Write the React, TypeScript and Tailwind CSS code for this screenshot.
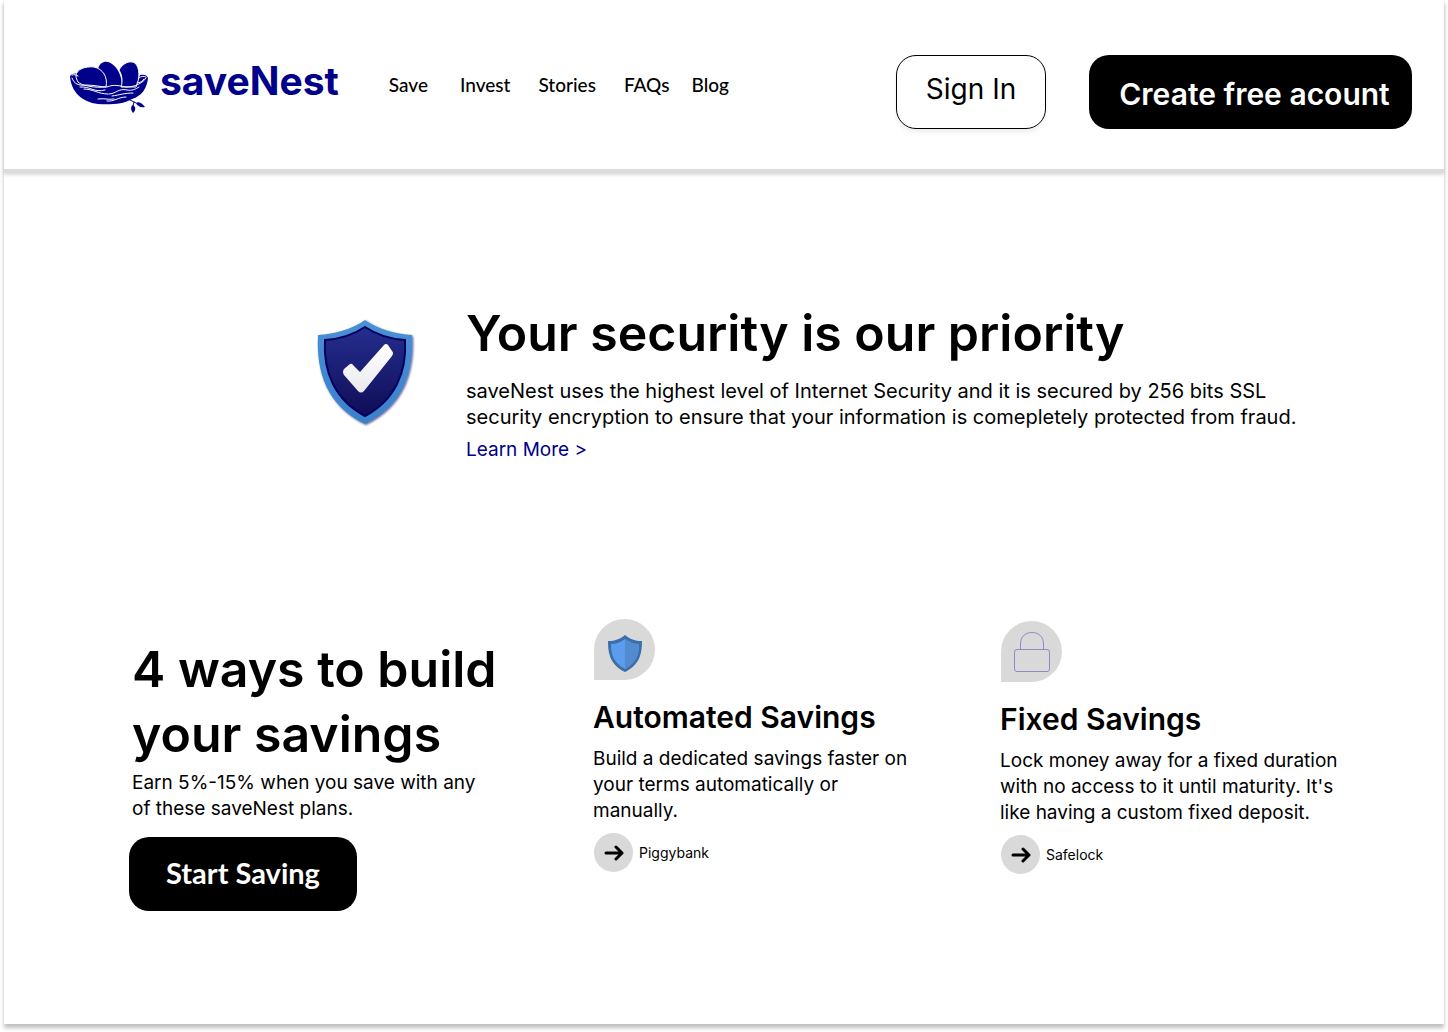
import React from "react";

function NestLogo() {
  return (
    <svg viewBox="0 0 100 70" className="h-[70px] w-[100px]" aria-hidden="true">
      <g fill="#00008b">
        <path d="M10 26C12 23 16 23 20 24L24 34C42 38 62 38 76 34L80 25C84 24 87 25 88 28C87 38 82 46 72 49C64 54 50 55 38 54C22 52 11 42 10 26Z" />
        <path d="M38 19C40 11 47 10 52 14C58 18 62 26 62 37H44Z" />
        <g stroke="#fff" strokeWidth="1">
          <path d="M59 20C63 13 70 10 75 13C80 18 80 28 76 37H61C63 31 62 25 59 20Z" />
          <path d="M16 26C16 19 26 16 34 17C43 19 48 27 46 37C36 38 22 36 18 32C17 30 16 28 16 26Z" />
        </g>
        <path d="M73 55C70 56 71 61 73 63C76 60 76 57 73 55Z" />
        <path d="M76 53C78 51 82 53 85 57C81 58 77 56 76 53Z" />
      </g>
      <path d="M66 48L76 53M74 52L73 56" fill="none" stroke="#00008b" strokeWidth="1" strokeLinecap="round" />
      <g fill="none" stroke="#fff" strokeWidth="1" strokeLinecap="round">
        <path d="M12 25C14 24 16 25 18 26M12 28C14 34 19 36 26 35C34 35 41 37 47 37C54 34 60 36 66 37C75 37 83 33 86 28" />
        <path d="M79 28C81 26 84 26 86 27M77 33C80 33 83 31 84 29" />
        <path d="M20 37C30 36 34 43 45 40" />
        <path d="M24 39C33 39 38 44 48 44" />
        <path d="M49 44C56 44 58 38 67 40C72 41 76 39 79 37" />
        <path d="M52 46C60 45 64 43 73 43" />
        <path d="M38 49C44 48 48 50 54 49" />
        <path d="M47 51C54 52 58 47 66 47" />
      </g>
    </svg>
  );
}

function CheckShield() {
  return (
    <svg viewBox="0 0 130 130" className="h-[130px] w-[130px]" aria-hidden="true">
      <defs>
        <linearGradient id="shieldRim" x1="0" y1="0" x2="0" y2="1">
          <stop offset="0" stopColor="#4a90d5" />
          <stop offset="1" stopColor="#3a80cb" />
        </linearGradient>
        <linearGradient id="shieldBody" x1="0" y1="0" x2="0" y2="1">
          <stop offset="0" stopColor="#242e8e" />
          <stop offset="1" stopColor="#100d58" />
        </linearGradient>
        <linearGradient id="checkFill" x1="0" y1="0" x2="0" y2="1">
          <stop offset="0" stopColor="#ffffff" />
          <stop offset="1" stopColor="#e9e9ee" />
        </linearGradient>
        <filter id="shieldShadow" x="-20%" y="-20%" width="140%" height="140%">
          <feDropShadow dx="1" dy="1" stdDeviation="0.8" floodColor="#1c1560" floodOpacity="0.7" />
        </filter>
      </defs>
      <path
        d="M65 15C78 24 95 29 112 30C114 67 103 101 65 119C27 101 16 67 18 30C35 29 52 24 65 15Z"
        fill="url(#shieldRim)"
        filter="url(#shieldShadow)"
      />
      <path
        d="M65 22C77 30 90 34 105 35C107 67 95 95 65 111C35 95 23 67 25 35C40 34 53 30 65 22Z"
        fill="url(#shieldBody)"
        stroke="#02005e"
        strokeWidth="2"
      />
      <path
        d="M44 64L50 59Q52 58 53 60L60 67L84 40Q86 38 88 40L92 46Q94 48 92 51L64 86Q61 89 58 86L44 70Q42 67 44 64Z"
        fill="url(#checkFill)"
      />
    </svg>
  );
}

function SmallShield() {
  return (
    <svg viewBox="0 0 34 37" className="h-[37px] w-[34px]" aria-hidden="true">
      <path d="M17 0C22 4 27 6 34 6C34 20 31 30 17 37C3 30 0 20 0 6C7 6 12 4 17 0Z" fill="#3a6fa8" />
      <path d="M17 4C21 7 26 9 31 9C31 20 28 28 17 34C6 28 3 20 3 9C8 9 13 7 17 4Z" fill="#5c9cec" />
      <path d="M17 4C21 7 26 9 31 9C31 20 28 28 17 34Z" fill="#538bd0" />
    </svg>
  );
}

function Padlock() {
  return (
    <svg viewBox="0 0 36 40" className="h-10 w-9" fill="none" stroke="#8c8cc0" aria-hidden="true">
      <rect x="0.5" y="17.5" width="35" height="22" rx="2.5" />
      <path d="M6.500 17.500V12C6.500 5 11 0.500 18 0.500S29.500 5 29.500 12V17.500" />
    </svg>
  );
}

function Plan({ icon, title, lines, link, className }: {
  icon: React.ReactNode;
  title: string;
  lines: string[];
  link: string;
  className: string;
}) {
  return (
    <article className={className}>
      <div className="ml-px flex h-[61px] w-[61px] items-end justify-center rounded-full rounded-bl-none bg-[#d9d9d9]">
        {icon}
      </div>
      <h3 className="mt-[18px] text-[30px] leading-[39px] font-semibold whitespace-nowrap">{title}</h3>
      <p className="mt-[9px] text-[19px] leading-[26px] whitespace-nowrap">
        {lines.map((line) => (
          <span key={line} className="block">{line}</span>
        ))}
      </p>
      <a href="#" className="mt-[9px] ml-px flex items-center gap-1.5 text-sm">
        <span className="flex size-[39px] items-center justify-center rounded-full bg-[#d9d9d9]">
          <svg viewBox="0 0 20 16" className="h-4 w-5" fill="none" stroke="#000" strokeWidth="3" strokeLinecap="round" strokeLinejoin="round" aria-hidden="true">
            <path d="M2 8H18M12 2L18 8L12 14" />
          </svg>
        </span>
        {link}
      </a>
    </article>
  );
}

export default function App() {
  return (
    <div className="bg-white pb-2 font-['Inter',sans-serif] text-black">
      <div className="mx-1 bg-white pb-[113px] shadow-[0_4px_4px_rgba(0,0,0,0.25)]">
        <header className="flex items-start border-b-4 border-[#dcdcdc] pt-[50px] pr-8 pb-10 pl-14 shadow-[0_2px_3px_rgba(0,0,0,0.15)]">
          <a href="#" className="flex shrink-0 items-start text-[#00008b]">
            <NestLogo />
            <span className="text-[39px] leading-[62px] font-bold">saveNest</span>
          </a>
          <nav className="ml-[50px] flex font-['Lato',sans-serif] text-[19px] leading-[70px] font-medium">
            <a href="#">Save</a>
            <a href="#" className="ml-8">Invest</a>
            <a href="#" className="ml-7">Stories</a>
            <a href="#" className="ml-7">FAQs</a>
            <a href="#" className="ml-[22px]">Blog</a>
          </nav>
          <div className="mt-[5px] ml-auto flex shrink-0 gap-[43px]">
            <button className="h-[74px] w-[150px] rounded-[20px] border border-black pb-1.5 text-[28px] shadow-[0_4px_4px_rgba(0,0,0,0.06)]">
              Sign In
            </button>
            <button className="h-[74px] w-[323px] rounded-[20px] bg-black pt-1 pl-2 text-[30px] font-semibold whitespace-nowrap text-white">
              Create free acount
            </button>
          </div>
        </header>

        <section className="flex items-start pt-32 pl-[296px]">
          <div className="mt-1 shrink-0">
            <CheckShield />
          </div>
          <div className="ml-9">
            <h1 className="text-[50px] leading-[65px] font-semibold whitespace-nowrap">Your security is our priority</h1>
            <p className="mt-3 text-xl leading-[26px] whitespace-nowrap">
              saveNest uses the highest level of Internet Security and it is secured by 256 bits SSL
              <br />
              security encryption to ensure that your information is comepletely protected from fraud.
            </p>
            <a href="#" className="mt-[7px] block text-[19px] leading-[26px] text-[#00008b]">Learn More &gt;</a>
          </div>
        </section>

        <section className="mt-[156px] flex items-start pl-32">
          <div className="w-[461px] shrink-0 pt-[18px]">
            <h2 className="text-[50px] leading-[65px] font-semibold whitespace-nowrap">
              4 ways to build
              <br />
              your savings
            </h2>
            <p className="mt-[3px] text-[19px] leading-[26px] whitespace-nowrap">
              Earn 5%-15% when you save with any
              <br />
              of these saveNest plans.
            </p>
            <button className="mt-[15px] -ml-[3px] h-[74px] w-[228px] rounded-[20px] bg-black pb-0.5 font-['Lato',sans-serif] text-[29px] font-bold text-white">
              Start Saving
            </button>
          </div>
          <Plan
            className="w-[407px] shrink-0"
            icon={<div className="pb-2"><SmallShield /></div>}
            title="Automated Savings"
            lines={["Build a dedicated savings faster on", "your terms automatically or", "manually."]}
            link="Piggybank"
          />
          <Plan
            className="pt-0.5"
            icon={<div className="pb-2.5"><Padlock /></div>}
            title="Fixed Savings"
            lines={["Lock money away for a fixed duration", "with no access to it until maturity. It's", "like having a custom fixed deposit."]}
            link="Safelock"
          />
        </section>
      </div>
    </div>
  );
}
